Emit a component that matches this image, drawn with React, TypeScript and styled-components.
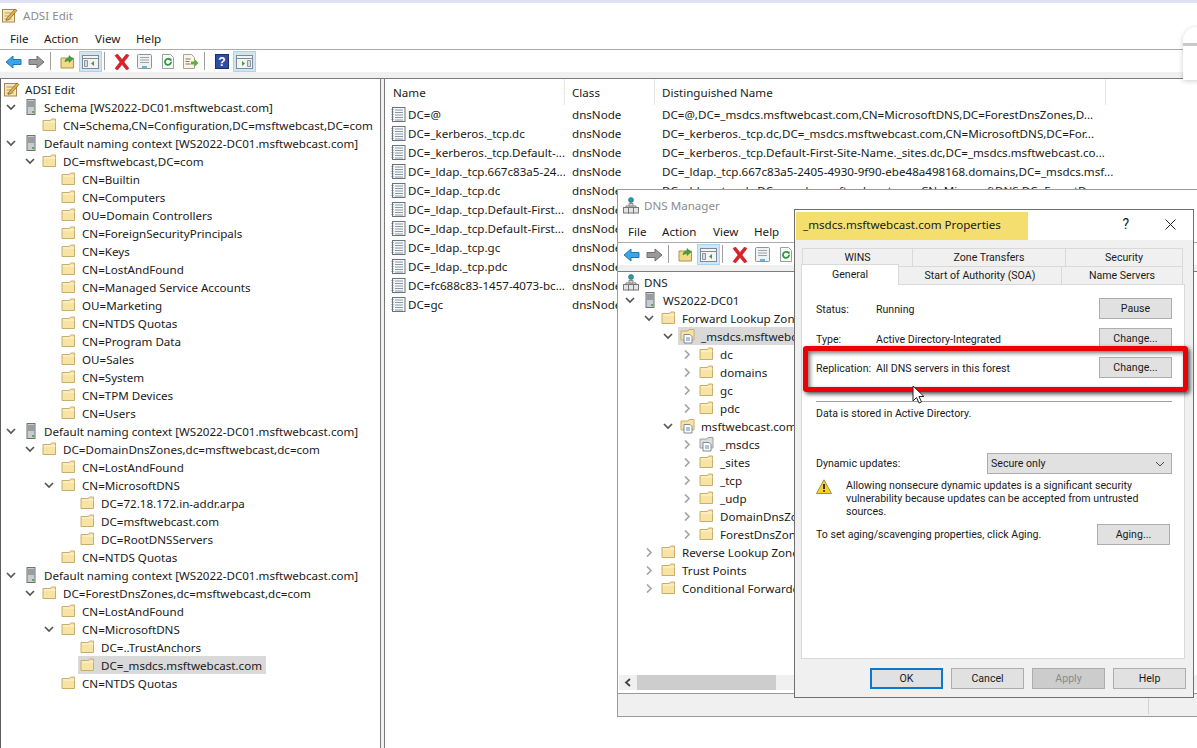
import React from 'react';
import styled, { createGlobalStyle } from 'styled-components';

const GlobalStyle = createGlobalStyle`
  html, body {
    margin: 0;
    padding: 0;
    height: 100%;
    overflow: hidden;
    background: #fff;
  }
  body {
    font-family: "Noto Sans", "Open Sans", "Liberation Sans", sans-serif;
    font-size: 11.6px;
    color: #1a1a1a;
  }
  * { box-sizing: border-box; }
  svg { flex: none; }
`;

/* ---------- window chrome ---------- */

const Desktop = styled.div`
  position: relative;
  width: 1197px;
  height: 748px;
  overflow: hidden;
`;

const TopStrip = styled.div`
  height: 3px;
  background: #dfe0f1;
`;

const MainWindow = styled.div`
  height: 748px;
  display: flex;
  flex-direction: column;
`;

const TitleBar = styled.div<{ $h: number; $pad: number }>`
  height: ${(p) => p.$h}px;
  padding-left: ${(p) => p.$pad}px;
  display: flex;
  align-items: center;
  gap: 5px;
  color: #8c8c8c;
  background: #fff;
  flex: none;
`;

const MenuBar = styled.div`
  height: 23px;
  display: grid;
  grid-template-columns: 34px 51px 41px auto;
  align-items: center;
  padding-left: 10px;
  background: #fff;
  border-bottom: 1px solid #ababab;
  flex: none;
`;

const ToolbarRow = styled.div`
  height: 22px;
  display: flex;
  align-items: flex-end;
  padding-left: 2px;
  background: #fff;
  flex: none;
`;

const ToolButton = styled.div<{ $active?: boolean }>`
  width: 23px;
  height: 21px;
  display: flex;
  align-items: center;
  justify-content: center;
  background: ${(p) => (p.$active ? '#cfe6f7' : 'transparent')};
  border: 1px solid ${(p) => (p.$active ? '#a9d3f0' : 'transparent')};
`;

const ToolSep = styled.div`
  width: 1px;
  height: 18px;
  margin: 0 5px 2px 2px;
  background: #a0a0a0;
`;

const ToolbarFoot = styled.div`
  height: 7px;
  background: #f0f0f0;
  border-bottom: 1px solid #7c7c7c;
  flex: none;
`;

const SplitArea = styled.div`
  flex: 1;
  min-height: 0;
  display: flex;
  gap: 3px;
  background: #f0f0f0;
`;

const TreePane = styled.div`
  width: 381px;
  background: #fff;
  border-left: 1px solid #5e5e5e;
  border-right: 1px solid #7a7a7a;
  padding-top: 1px;
  overflow: hidden;
  flex: none;
`;

const ListPane = styled.div`
  flex: 1;
  background: #fff;
  border-left: 1px solid #7a7a7a;
  overflow: hidden;
`;

/* ---------- tree ---------- */

const Row = styled.div<{ $level: number }>`
  height: 18px;
  display: flex;
  align-items: center;
  position: relative;
  padding-left: ${(p) => 3 + (p.$level + 1) * 19}px;
  white-space: nowrap;
`;

const Chevron = styled.span`
  position: absolute;
  top: 5px;
  margin-left: -17px;
  width: 10px;
  height: 9px;
  display: flex;
`;

const NodeBody = styled.div<{ $selected?: boolean }>`
  display: flex;
  align-items: center;
  height: 18px;
  gap: 6px;
  padding: 0 4px 0 2px;
  margin-left: -2px;
  background: ${(p) => (p.$selected ? '#d9d9d9' : 'transparent')};
`;

const IconSlot = styled.span`
  width: 15px;
  height: 16px;
  display: flex;
  align-items: center;
  justify-content: center;
  flex: none;
`;

/* ---------- list ---------- */

const ListHead = styled.div`
  height: 26px;
  padding-left: 1px;
  display: grid;
  grid-template-columns: 179px 90px 451px;
  align-items: center;
`;

const HeadCell = styled.div`
  height: 26px;
  padding-left: 7px;
  display: flex;
  align-items: center;
  border-right: 1px solid #e6e6e6;
`;

const ListRow = styled.div`
  height: 19px;
  display: grid;
  grid-template-columns: 180px 90px 470px;
  align-items: center;
  white-space: nowrap;
`;

const NameCell = styled.div`
  display: flex;
  align-items: center;
  gap: 2px;
  padding-left: 6px;
  overflow: hidden;
`;

const ListCell = styled.div`
  padding-left: 7px;
`;

/* ---------- dns manager ---------- */

const DnsWindow = styled.div`
  position: absolute;
  left: 617px;
  top: 189px;
  width: 600px;
  height: 528px;
  display: flex;
  flex-direction: column;
  background: #fff;
  border: 1px solid #9a9a9a;
`;

const DnsBody = styled.div`
  flex: 1;
  min-height: 0;
  display: flex;
  flex-direction: column;
  padding-top: 1px;
  overflow: hidden;
`;

const DnsTree = styled.div`
  flex: 1;
  min-height: 0;
  padding-left: 2px;
  overflow: hidden;
`;

const HScroll = styled.div`
  height: 15px;
  margin: 0 0 3px 1px;
  background: #f0f0f0;
  display: flex;
  align-items: center;
  flex: none;
`;

const ScrollArrow = styled.span`
  width: 18px;
  height: 15px;
  display: flex;
  align-items: center;
  justify-content: center;
`;

const ScrollThumb = styled.div`
  width: 139px;
  height: 15px;
  background: #cdcdcd;
`;

const StatusBar = styled.div`
  height: 23px;
  background: #f0f0f0;
  border-top: 1px solid #9a9a9a;
  flex: none;
  display: flex;
  justify-content: flex-end;
`;

const StatusCell = styled.div`
  width: 68px;
  margin-bottom: 2px;
  border-left: 1px solid #d4d4d4;
`;

/* ---------- properties dialog ---------- */

const Dialog = styled.div`
  position: absolute;
  left: 794px;
  top: 209px;
  width: 400px;
  height: 489px;
  display: flex;
  flex-direction: column;
  background: #f0f0f0;
  border: 1px solid #6f6f6f;
  font-family: Roboto, "Liberation Sans", sans-serif;
  font-size: 10.6px;
`;

const DialogTitle = styled.div`
  height: 30px;
  background: #fff;
  display: flex;
  align-items: center;
  justify-content: space-between;
  flex: none;
`;

const TitleHighlight = styled.div`
  margin: 1px 0 0 1px;
  width: 232px;
  height: 28px;
  padding: 0 0 2px 7px;
  display: flex;
  align-items: center;
  background: #f4df6e;
  font-family: "Noto Sans", sans-serif;
  font-size: 11.6px;
`;

const TitleActions = styled.div`
  display: flex;
  align-items: center;
  gap: 36px;
  padding: 0 17px 2px 0;
  font-size: 14px;
`;

const TabArea = styled.div`
  padding: 8px 8px 0 6px;
  flex: none;
`;

const TabRow = styled.div<{ $columns: string }>`
  display: grid;
  grid-template-columns: ${(p) => p.$columns};
  height: 18px;
`;

const BackTabRow = styled(TabRow)`
  margin-left: 2px;
`;

const Tab = styled.div`
  display: flex;
  align-items: center;
  justify-content: center;
  background: #f0f0f0;
  border: 1px solid #d9d9d9;
  border-bottom: none;
  margin-left: -1px;
`;

const ActiveTab = styled(Tab)`
  background: #fff;
  margin: -2px 0 -1px 0;
  height: 21px;
  padding-bottom: 2px;
  position: relative;
  z-index: 2;
`;

const TabPanel = styled.div`
  flex: none;
  height: 375px;
  margin: 0 8px 0 6px;
  padding: 13px 12px 0 14px;
  background: #fff;
  border: 1px solid #d9d9d9;
  display: flex;
  flex-direction: column;
`;

const InfoRow = styled.div<{ $mb: number }>`
  height: 21px;
  margin-bottom: ${(p) => p.$mb}px;
  display: flex;
  align-items: center;
  flex: none;
`;

const InfoLabel = styled.span`
  width: 60px;
  margin-top: 2px;
  flex: none;
`;

const InfoValue = styled.span`
  flex: 1;
  margin-top: 2px;
`;

const DlgButton = styled.div<{ $disabled?: boolean; $focus?: boolean }>`
  width: 73px;
  height: 21px;
  display: flex;
  align-items: center;
  justify-content: center;
  flex: none;
  background: ${(p) => (p.$disabled ? '#cccccc' : '#e1e1e1')};
  color: ${(p) => (p.$disabled ? '#8a8a8a' : '#1a1a1a')};
  border: ${(p) => (p.$focus ? '2px solid #0a78d0' : '1px solid #adadad')};
`;

const Rule = styled.div`
  height: 1px;
  background: #a0a0a0;
  margin: 23px 0 5px;
  flex: none;
`;

const PlainLine = styled.div`
  height: 14px;
  line-height: 14px;
  flex: none;
`;

const UpdatesRow = styled.div`
  margin-top: 32px;
  height: 21px;
  display: flex;
  align-items: center;
  justify-content: space-between;
  flex: none;
`;

const SelectBox = styled.div`
  width: 185px;
  height: 21px;
  padding: 0 6px 0 3px;
  display: flex;
  align-items: center;
  justify-content: space-between;
  background: #e1e1e1;
  border: 1px solid #adadad;
`;

const WarnRow = styled.div`
  margin-top: 5px;
  display: flex;
  gap: 14px;
  line-height: 13px;
  flex: none;
`;

const AgingRow = styled.div`
  margin-top: 6px;
  height: 21px;
  display: flex;
  align-items: center;
  justify-content: space-between;
  padding-right: 2px;
  flex: none;
`;

const DialogFoot = styled.div`
  padding: 9px 7px 0 0;
  display: flex;
  justify-content: flex-end;
  gap: 8px;
  flex: none;
`;

/* ---------- overlays ---------- */

const RedBox = styled.div`
  position: absolute;
  left: 803px;
  top: 346px;
  width: 385px;
  height: 46px;
  border: 5px solid #ec0008;
  border-radius: 3px;
  box-shadow: 2px 2px 4px rgba(0, 0, 0, 0.7), inset 2px 2px 4px rgba(0, 0, 0, 0.55);
`;

const Pointer = styled.svg`
  position: absolute;
  left: 912px;
  top: 385px;
`;

const CornerWidget = styled.div`
  position: absolute;
  left: 1183px;
  top: 27px;
  width: 30px;
  height: 53px;
  border-radius: 14px 0 0 0;
  background: linear-gradient(#fff 0 16px, #c9c9c9 16px 19px, #fff 19px);
  box-shadow: 0 1px 5px rgba(0, 0, 0, 0.2);
`;

/* ---------- drawings ---------- */

const Folder = () => (
  <svg width="15" height="14" viewBox="0 0 15 14">
    <path d="M1 2.500h7.500l1-1.500h4v11.500H1z" fill="#f7e3a4" stroke="#c9ad6c" />
    <path d="M2 4h11.500" stroke="#fdf5d8" />
  </svg>
);

const ZoneIcon = ({ grey }: { grey?: boolean }) => (
  <svg width="15" height="16" viewBox="0 0 15 16">
    <path d="M1 3h7l1-1.500h5V12H1z" fill={grey ? '#dcdcdc' : '#f7e3a4'} stroke={grey ? '#a0a0a0' : '#c9ad6c'} />
    <path d="M4 6.500h6l2 2V15H4z" fill="#fff" stroke="#7d8a99" />
    <path d="M6 10h4M6 12h4" stroke="#5d88b5" />
  </svg>
);

const ServerIcon = () => (
  <svg width="10" height="16" viewBox="0 0 10 16">
    <rect x="1" y="0.500" width="8" height="15" fill="#c8ccd0" stroke="#6e7378" />
    <path d="M2 3h6M2 5h6M2 7h6" stroke="#666c72" />
    <rect x="6" y="12" width="2" height="2" fill="#58b04a" />
  </svg>
);

const AdsiIcon = () => (
  <svg width="16" height="16" viewBox="0 0 16 16">
    <rect x="0.500" y="2.500" width="12" height="12.500" fill="#f6e7b4" stroke="#a8884a" />
    <path d="M2.500 6h7M2.500 9h6M2.500 12h7" stroke="#b59c66" />
    <path d="M5 11l8-9 2 1.500-8 9-3 1z" fill="#e8b24a" stroke="#7a5a22" strokeWidth="0.700" />
  </svg>
);

const DnsIcon = () => (
  <svg width="16" height="17" viewBox="0 0 16 17">
    <circle cx="8" cy="3" r="2.500" fill="#2a9a9c" stroke="#1c6f78" strokeWidth="0.600" />
    <path d="M8 5.500V9M3 10V9h10v1" stroke="#777" fill="none" />
    <rect x="6" y="6.500" width="4" height="2.500" fill="#d4d4d4" stroke="#777" strokeWidth="0.700" />
    <rect x="0.500" y="10.500" width="5" height="5.500" fill="#e4e4e4" stroke="#777" />
    <rect x="5.500" y="10.500" width="5" height="5.500" fill="#e4e4e4" stroke="#777" />
    <rect x="10.500" y="10.500" width="5" height="5.500" fill="#e4e4e4" stroke="#777" />
  </svg>
);

const ChevronDown = () => (
  <svg width="10" height="9" viewBox="0 0 10 9">
    <path d="M1 2l4 4 4-4" fill="none" stroke="#555" strokeWidth="1.700" />
  </svg>
);

const ChevronRight = () => (
  <svg width="10" height="9" viewBox="0 0 10 9">
    <path d="M3 0.500l4 4-4 4" fill="none" stroke="#a6a6a6" strokeWidth="1.700" />
  </svg>
);

const RecordIcon = () => (
  <svg width="15" height="15" viewBox="0 0 15 15">
    <rect x="1.500" y="0.500" width="12.500" height="14" fill="#f7f9fb" stroke="#69737d" />
    <path d="M0.500 2.500h2M0.500 5h2M0.500 7.500h2M0.500 10h2M0.500 12.500h2" stroke="#69737d" />
    <path d="M4 3h8M4 5.500h8M4 8h8M4 10.500h8M4 13h8" stroke="#8a98a6" />
  </svg>
);

const ArrowIcon = ({ dir, fill, edge }: { dir: 'left' | 'right'; fill: string; edge: string }) => (
  <svg width="17" height="14" viewBox="0 0 17 14" style={dir === 'right' ? { transform: 'scaleX(-1)' } : undefined}>
    <path d="M1 7l7-6v3.500h8v5H8V13z" fill={fill} stroke={edge} />
  </svg>
);

const UpIcon = () => (
  <svg width="15" height="15" viewBox="0 0 15 15">
    <path d="M1 4h12.500v10H1z" fill="#f3d98a" stroke="#b09548" />
    <path d="M5 8c0-3 2-4 4-4V1.500L13 5 9 8.500V6.500C7.500 6.500 6 7 5 8z" fill="#3ea23e" stroke="#2b7a2b" strokeWidth="0.500" />
  </svg>
);

const PaneIcon = ({ side }: { side: 'left' | 'right' }) => (
  <svg width="17" height="14" viewBox="0 0 17 14">
    <rect x="0.500" y="0.500" width="16" height="13" fill="#f4f4f4" stroke="#7f8a94" />
    <path d="M1 3.500h15" stroke="#7f8a94" />
    {side === 'left' ? (
      <>
        <path d="M2.500 5.500h3v6h-3z" fill="#d5dce2" stroke="#8a95a0" />
        <path d="M12 6l-3 2.500 3 2.500z" fill="#3f9e3f" />
      </>
    ) : (
      <>
        <path d="M11.500 5.500h3v6h-3z" fill="#d5dce2" stroke="#8a95a0" />
        <path d="M6 6l3 2.500-3 2.500z" fill="#3f9e3f" />
      </>
    )}
  </svg>
);

const DeleteIcon = () => (
  <svg width="16" height="16" viewBox="0 0 16 16">
    <path d="M1 1.500L3.500 0 8 5.500 12.500 0 15 1.500 10 8l5 6.500-2.500 1.500L8 10.500 3.500 16 1 14.500 6 8z" fill="#dc2229" stroke="#a8141a" strokeWidth="0.500" />
  </svg>
);

const PropsIcon = () => (
  <svg width="15" height="15" viewBox="0 0 15 15">
    <rect x="0.500" y="0.500" width="14" height="14" rx="1" fill="#f2f2f2" stroke="#8d959c" />
    <path d="M3 3.500h9M3 6h9M3 8.500h9" stroke="#9aa4ad" />
    <path d="M5 13h5" stroke="#3aa0d8" strokeWidth="1.500" />
  </svg>
);

const RefreshIcon = () => (
  <svg width="14" height="15" viewBox="0 0 14 15">
    <path d="M1.500 0.500h8l3 3v11h-11z" fill="#fafafa" stroke="#98a0a6" />
    <path d="M10 8a3 3 0 1 1-1-2.300" fill="none" stroke="#2f9a3a" strokeWidth="1.800" />
    <path d="M7 4.500h3.500V8z" fill="#2f9a3a" />
  </svg>
);

const ExportIcon = () => (
  <svg width="17" height="15" viewBox="0 0 17 15">
    <path d="M1.500 0.500h8l3 3v11h-11z" fill="#fbf6e4" stroke="#a7a394" />
    <path d="M3.500 5h5M3.500 7.500h4M3.500 10h5" stroke="#777" />
    <path d="M9 7.500h3.500V5l4 4-4 4v-2.500H9z" fill="#62b044" />
  </svg>
);

const HelpIcon = () => (
  <svg width="14" height="15" viewBox="0 0 14 15">
    <rect x="0.500" y="0.500" width="13" height="14" fill="#2f4da3" stroke="#1a2f72" />
    <text x="7" y="12" textAnchor="middle" fontSize="12" fontWeight="700" fill="#fff" fontFamily="Liberation Sans, sans-serif">?</text>
  </svg>
);

const WarnIcon = () => (
  <svg width="16" height="15" viewBox="0 0 16 15">
    <path d="M8 0.800L15.500 14.500H0.500z" fill="#f7d21e" stroke="#9c9152" />
    <path d="M8 5v5" stroke="#222" strokeWidth="1.800" />
    <circle cx="8" cy="12" r="1" fill="#222" />
  </svg>
);

const CloseIcon = () => (
  <svg width="11" height="11" viewBox="0 0 11 11">
    <path d="M0.500 0.500l10 10M10.500 0.500l-10 10" stroke="#222" />
  </svg>
);

const Toolbar = () => (
  <ToolbarRow>
    <ToolButton><ArrowIcon dir="left" fill="#3ba4e8" edge="#1f78b8" /></ToolButton>
    <ToolButton><ArrowIcon dir="right" fill="#9a9a9a" edge="#6f6f6f" /></ToolButton>
    <ToolSep />
    <ToolButton><UpIcon /></ToolButton>
    <ToolButton $active><PaneIcon side="left" /></ToolButton>
    <ToolSep />
    <ToolButton><DeleteIcon /></ToolButton>
    <ToolButton><PropsIcon /></ToolButton>
    <ToolButton><RefreshIcon /></ToolButton>
    <ToolButton><ExportIcon /></ToolButton>
    <ToolSep />
    <ToolButton><HelpIcon /></ToolButton>
    <ToolButton $active><PaneIcon side="right" /></ToolButton>
  </ToolbarRow>
);

const Menus = () => (
  <MenuBar>
    <span>File</span>
    <span>Action</span>
    <span>View</span>
    <span>Help</span>
  </MenuBar>
);

/* ---------- data ---------- */

type Kind = 'folder' | 'server' | 'adsi' | 'dns' | 'zone' | 'zoneGrey';
type Exp = 'open' | 'closed' | 'none';
type Node = [number, Kind, Exp, string, boolean?];

const adsiTree: Node[] = [
  [-1, 'adsi', 'none', 'ADSI Edit'],
  [0, 'server', 'open', 'Schema [WS2022-DC01.msftwebcast.com]'],
  [1, 'folder', 'none', 'CN=Schema,CN=Configuration,DC=msftwebcast,DC=com'],
  [0, 'server', 'open', 'Default naming context [WS2022-DC01.msftwebcast.com]'],
  [1, 'folder', 'open', 'DC=msftwebcast,DC=com'],
  [2, 'folder', 'none', 'CN=Builtin'],
  [2, 'folder', 'none', 'CN=Computers'],
  [2, 'folder', 'none', 'OU=Domain Controllers'],
  [2, 'folder', 'none', 'CN=ForeignSecurityPrincipals'],
  [2, 'folder', 'none', 'CN=Keys'],
  [2, 'folder', 'none', 'CN=LostAndFound'],
  [2, 'folder', 'none', 'CN=Managed Service Accounts'],
  [2, 'folder', 'none', 'OU=Marketing'],
  [2, 'folder', 'none', 'CN=NTDS Quotas'],
  [2, 'folder', 'none', 'CN=Program Data'],
  [2, 'folder', 'none', 'OU=Sales'],
  [2, 'folder', 'none', 'CN=System'],
  [2, 'folder', 'none', 'CN=TPM Devices'],
  [2, 'folder', 'none', 'CN=Users'],
  [0, 'server', 'open', 'Default naming context [WS2022-DC01.msftwebcast.com]'],
  [1, 'folder', 'open', 'DC=DomainDnsZones,dc=msftwebcast,dc=com'],
  [2, 'folder', 'none', 'CN=LostAndFound'],
  [2, 'folder', 'open', 'CN=MicrosoftDNS'],
  [3, 'folder', 'none', 'DC=72.18.172.in-addr.arpa'],
  [3, 'folder', 'none', 'DC=msftwebcast.com'],
  [3, 'folder', 'none', 'DC=RootDNSServers'],
  [2, 'folder', 'none', 'CN=NTDS Quotas'],
  [0, 'server', 'open', 'Default naming context [WS2022-DC01.msftwebcast.com]'],
  [1, 'folder', 'open', 'DC=ForestDnsZones,dc=msftwebcast,dc=com'],
  [2, 'folder', 'none', 'CN=LostAndFound'],
  [2, 'folder', 'open', 'CN=MicrosoftDNS'],
  [3, 'folder', 'none', 'DC=..TrustAnchors'],
  [3, 'folder', 'none', 'DC=_msdcs.msftwebcast.com', true],
  [2, 'folder', 'none', 'CN=NTDS Quotas'],
];

const dnsTree: Node[] = [
  [-1, 'dns', 'none', 'DNS'],
  [0, 'server', 'open', 'WS2022-DC01'],
  [1, 'folder', 'open', 'Forward Lookup Zones'],
  [2, 'zone', 'open', '_msdcs.msftwebcast.com', true],
  [3, 'folder', 'closed', 'dc'],
  [3, 'folder', 'closed', 'domains'],
  [3, 'folder', 'closed', 'gc'],
  [3, 'folder', 'closed', 'pdc'],
  [2, 'zone', 'open', 'msftwebcast.com'],
  [3, 'zoneGrey', 'closed', '_msdcs'],
  [3, 'folder', 'closed', '_sites'],
  [3, 'folder', 'closed', '_tcp'],
  [3, 'folder', 'closed', '_udp'],
  [3, 'folder', 'closed', 'DomainDnsZones'],
  [3, 'folder', 'closed', 'ForestDnsZones'],
  [1, 'folder', 'closed', 'Reverse Lookup Zones'],
  [1, 'folder', 'closed', 'Trust Points'],
  [1, 'folder', 'closed', 'Conditional Forwarders'],
];

const records = [
  ['DC=@', 'DC=@,DC=_msdcs.msftwebcast.com,CN=MicrosoftDNS,DC=ForestDnsZones,D...'],
  ['DC=_kerberos._tcp.dc', 'DC=_kerberos._tcp.dc,DC=_msdcs.msftwebcast.com,CN=MicrosoftDNS,DC=For...'],
  ['DC=_kerberos._tcp.Default-...', 'DC=_kerberos._tcp.Default-First-Site-Name._sites.dc,DC=_msdcs.msftwebcast.co...'],
  ['DC=_ldap._tcp.667c83a5-24...', 'DC=_ldap._tcp.667c83a5-2405-4930-9f90-ebe48a498168.domains,DC=_msdcs.msf...'],
  ['DC=_ldap._tcp.dc', 'DC=_ldap._tcp.dc,DC=_msdcs.msftwebcast.com,CN=MicrosoftDNS,DC=ForestD...'],
  ['DC=_ldap._tcp.Default-First...', ''],
  ['DC=_ldap._tcp.Default-First...', ''],
  ['DC=_ldap._tcp.gc', ''],
  ['DC=_ldap._tcp.pdc', ''],
  ['DC=fc688c83-1457-4073-bc...', ''],
  ['DC=gc', ''],
];

const iconFor = (kind: Kind) => {
  switch (kind) {
    case 'server': return <ServerIcon />;
    case 'adsi': return <AdsiIcon />;
    case 'dns': return <DnsIcon />;
    case 'zone': return <ZoneIcon />;
    case 'zoneGrey': return <ZoneIcon grey />;
    default: return <Folder />;
  }
};

const Tree = ({ nodes }: { nodes: Node[] }) => (
  <>
    {nodes.map(([level, kind, exp, text, selected], i) => (
      <Row key={i} $level={level}>
        {exp !== 'none' && (
          <Chevron>{exp === 'open' ? <ChevronDown /> : <ChevronRight />}</Chevron>
        )}
        <NodeBody $selected={selected}>
          <IconSlot>{iconFor(kind)}</IconSlot>
          <span>{text}</span>
        </NodeBody>
      </Row>
    ))}
  </>
);

const App: React.FC = () => (
  <Desktop>
    <GlobalStyle />
    <MainWindow>
      <TopStrip />
      <TitleBar $h={24} $pad={2}>
        <AdsiIcon />
        <span>ADSI Edit</span>
      </TitleBar>
      <Menus />
      <Toolbar />
      <ToolbarFoot />
      <SplitArea>
        <TreePane>
          <Tree nodes={adsiTree} />
        </TreePane>
        <ListPane>
          <ListHead>
            <HeadCell>Name</HeadCell>
            <HeadCell>Class</HeadCell>
            <HeadCell>Distinguished Name</HeadCell>
          </ListHead>
          {records.map(([name, dn], i) => (
            <ListRow key={i}>
              <NameCell>
                <RecordIcon />
                <span>{name}</span>
              </NameCell>
              <ListCell>dnsNode</ListCell>
              <ListCell>{dn}</ListCell>
            </ListRow>
          ))}
        </ListPane>
      </SplitArea>
    </MainWindow>
    <CornerWidget />

    <DnsWindow>
      <TitleBar $h={30} $pad={5}>
        <DnsIcon />
        <span>DNS Manager</span>
      </TitleBar>
      <Menus />
      <Toolbar />
      <ToolbarFoot />
      <DnsBody>
        <DnsTree>
          <Tree nodes={dnsTree} />
        </DnsTree>
        <HScroll>
          <ScrollArrow>
            <svg width="8" height="9" viewBox="0 0 8 9">
              <path d="M6 1L2 4.500 6 8" fill="none" stroke="#444" strokeWidth="1.800" />
            </svg>
          </ScrollArrow>
          <ScrollThumb />
        </HScroll>
        <StatusBar>
          <StatusCell />
        </StatusBar>
      </DnsBody>
    </DnsWindow>

    <Dialog>
      <DialogTitle>
        <TitleHighlight>_msdcs.msftwebcast.com Properties</TitleHighlight>
        <TitleActions>
          <span>?</span>
          <CloseIcon />
        </TitleActions>
      </DialogTitle>
      <TabArea>
        <BackTabRow $columns="110px 153px 117px">
          <Tab>WINS</Tab>
          <Tab>Zone Transfers</Tab>
          <Tab>Security</Tab>
        </BackTabRow>
        <TabRow $columns="98px 163px 121px">
          <ActiveTab>General</ActiveTab>
          <Tab>Start of Authority (SOA)</Tab>
          <Tab>Name Servers</Tab>
        </TabRow>
      </TabArea>
      <TabPanel>
        <InfoRow $mb={9}>
          <InfoLabel>Status:</InfoLabel>
          <InfoValue>Running</InfoValue>
          <DlgButton>Pause</DlgButton>
        </InfoRow>
        <InfoRow $mb={8}>
          <InfoLabel>Type:</InfoLabel>
          <InfoValue>Active Directory-Integrated</InfoValue>
          <DlgButton>Change...</DlgButton>
        </InfoRow>
        <InfoRow $mb={0}>
          <InfoLabel>Replication:</InfoLabel>
          <InfoValue>All DNS servers in this forest</InfoValue>
          <DlgButton>Change...</DlgButton>
        </InfoRow>
        <Rule />
        <PlainLine>Data is stored in Active Directory.</PlainLine>
        <UpdatesRow>
          <span>Dynamic updates:</span>
          <SelectBox>
            <span>Secure only</span>
            <svg width="10" height="6" viewBox="0 0 10 6">
              <path d="M1 1l4 4 4-4" fill="none" stroke="#444" />
            </svg>
          </SelectBox>
        </UpdatesRow>
        <WarnRow>
          <WarnIcon />
          <span>
            Allowing nonsecure dynamic updates is a significant security
            <br />
            vulnerability because updates can be accepted from untrusted
            <br />
            sources.
          </span>
        </WarnRow>
        <AgingRow>
          <span>To set aging/scavenging properties, click Aging.</span>
          <DlgButton>Aging...</DlgButton>
        </AgingRow>
      </TabPanel>
      <DialogFoot>
        <DlgButton $focus>OK</DlgButton>
        <DlgButton>Cancel</DlgButton>
        <DlgButton $disabled>Apply</DlgButton>
        <DlgButton>Help</DlgButton>
      </DialogFoot>
    </Dialog>

    <RedBox />
    <Pointer width="14" height="19" viewBox="0 0 14 19">
      <path d="M1 1v15l3.500-3.500 2.500 5.500 2.500-1-2.500-5.500H12z" fill="#fff" stroke="#222" />
    </Pointer>
  </Desktop>
);

export default App;
